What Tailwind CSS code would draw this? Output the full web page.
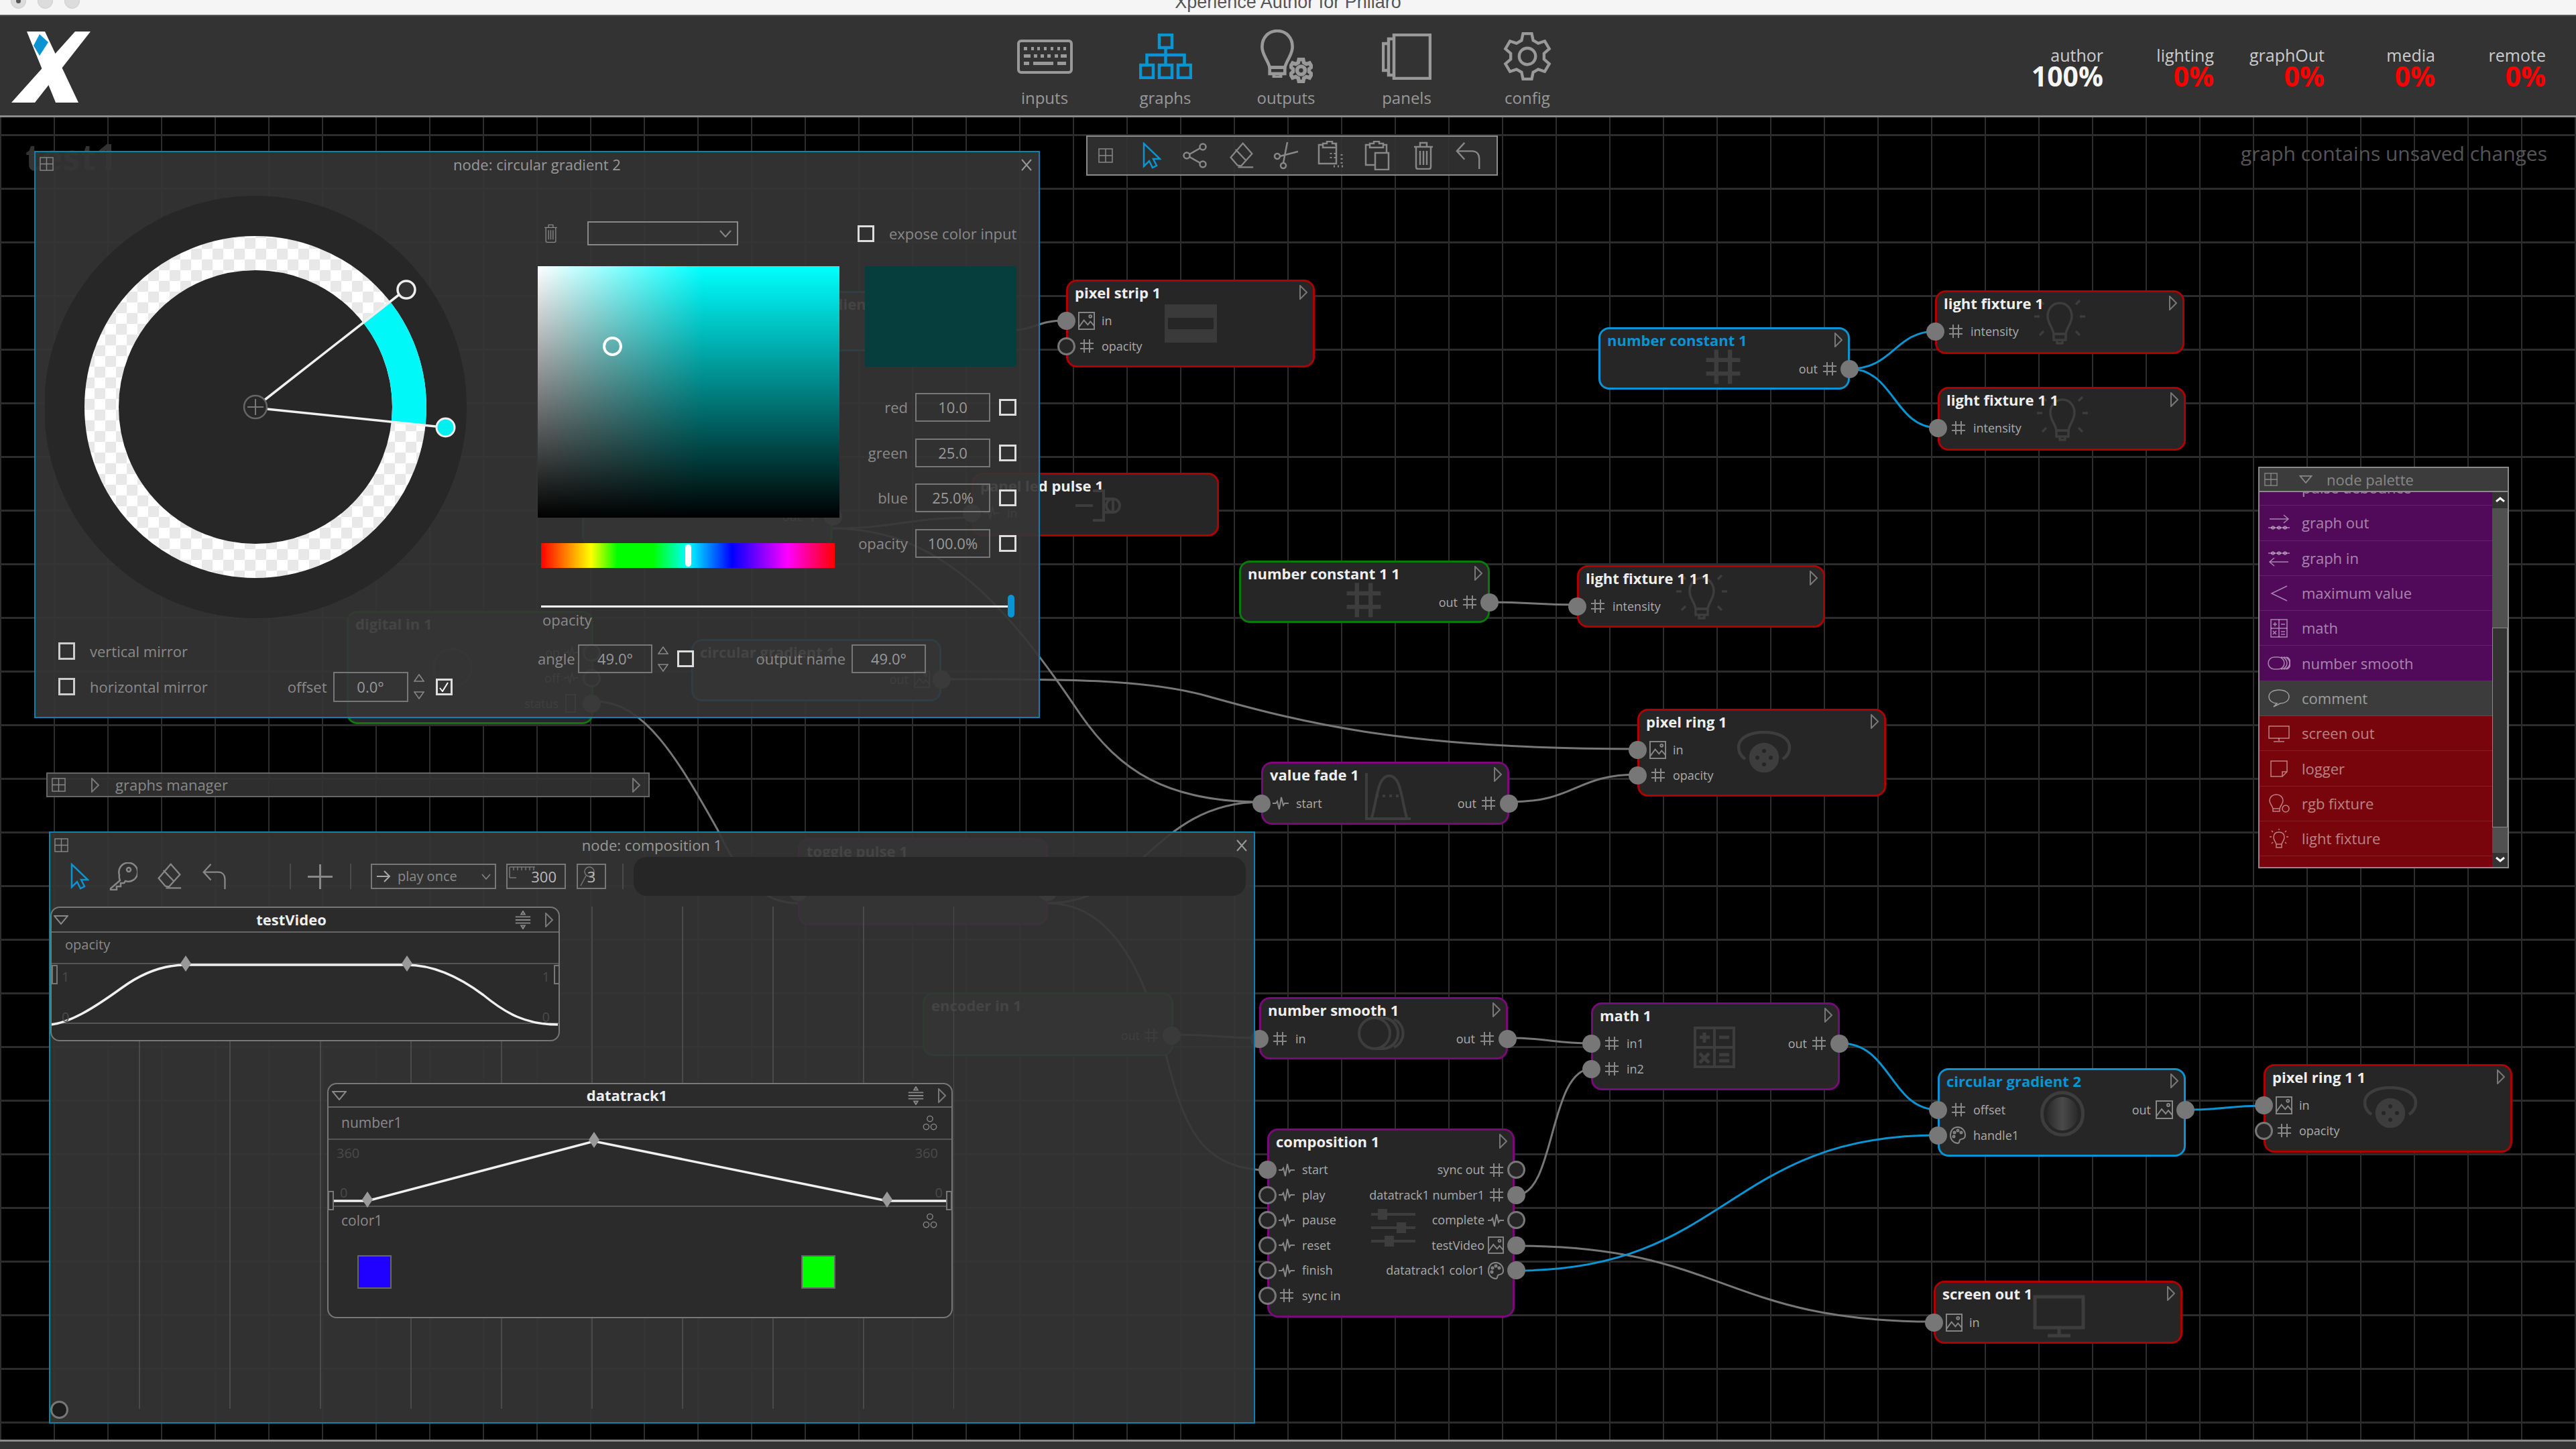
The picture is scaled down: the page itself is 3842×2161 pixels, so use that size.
<!DOCTYPE html>
<html lang="en">
<head>
  <meta charset="UTF-8">
  <title>Xperience Author for Philaro</title>
  <script src="https://cdn.jsdelivr.net/npm/@tailwindcss/browser@4"></script>
</head>
<body class="relative flex flex-col w-[3842px] h-[2161px] overflow-hidden bg-black font-['Open_Sans',sans-serif]">

  <!-- shared icons -->
  <svg class="hidden">
    <symbol id="tri" viewBox="0 0 12 22"><polygon points="1,1 11,11 1,21"/></symbol>
    <symbol id="grid" viewBox="0 0 22 22"><rect x="1" y="1" width="20" height="20"/><path d="M11 1v20M1 11h20"/></symbol>
    <symbol id="hash" viewBox="0 0 22 22"><path d="M7 1v20M15 1v20M1 7h20M1 15h20"/></symbol>
    <symbol id="pulse" viewBox="0 0 24 22"><path d="M0 11h5l2-3 3 12 3-18 3 12 2-3h6"/></symbol>
    <symbol id="image" viewBox="0 0 26 28"><rect x="1" y="1" width="24" height="26"/><path d="M1 24l8-11 6 7 4-5 6 7"/><circle cx="19" cy="7" r="2"/></symbol>
    <symbol id="palette" viewBox="0 0 24 26"><path d="M12 1C5 1 1 6 1 13s5 12 11 12c3 0 2-4 3-5 2-2 8 0 8-7S18 1 12 1z"/><circle cx="7" cy="9" r="1.5"/><circle cx="12" cy="6" r="1.5"/><circle cx="17" cy="9" r="1.5"/><circle cx="6" cy="15" r="1.5"/></symbol>
    <symbol id="gear" viewBox="0 0 100 100"><polygon points="38,17 41,3 59,3 62,17 72.500,23 86,18.500 95.400,34.400 84.500,44 84.500,56 95.400,65.600 86,81.500 72.500,77 62,83 59,97 41,97 38,83 27.500,77 14,81.500 4.600,65.600 15.500,56 15.500,44 4.600,34.400 14,18.500 27.500,23"/><circle cx="50" cy="50" r="17"/></symbol>
    <symbol id="bulb" viewBox="0 0 50 70"><path d="M25 2C12 2 3 12 3 25c0 12 8 18 11 30h22c3-12 11-18 11-30C47 12 38 2 25 2z"/><path d="M14 55h22v9H14zM20 64v5h10v-5"/></symbol>
    <symbol id="lamp" viewBox="0 0 80 76"><path d="M40 10C29 10 22 19 22 30c0 10 7 15 9 26h18c2-11 9-16 9-26 0-11-7-20-18-20z"/><path d="M31 56h18v9H31zM36 65v5h8v-5"/><path d="M2 30h8M70 30h8M10 6l6 6M70 6l-6 6M10 58l6-6M70 58l-6-6"/></symbol>
    <symbol id="pointer" viewBox="0 0 28 40"><path d="M2 2v34l8-8 5 10 6-3-5-10h10z"/></symbol>
    <symbol id="eraser" viewBox="0 0 42 44"><path d="M24 2l15 17-18 20-6-1L4 25z"/><path d="M12 12l17 18M16 41h25"/></symbol>
    <symbol id="undo" viewBox="0 0 40 44"><path d="M14 2L2 15l12 13M2 15h24c7 0 11 5 11 12v16"/></symbol>
    <symbol id="trash" viewBox="0 0 30 42"><path d="M1 8h28M10 8V2h10v6M4 8v30c0 2 1 3 3 3h16c2 0 3-1 3-3V8M10 14v21M15 14v21M20 14v21"/></symbol>
    <symbol id="vsort" viewBox="0 0 26 30"><path d="M1 10h24M1 15h24M1 20h24"/><path d="M13 1l3 5h-6zM13 29l3-5h-6z"/></symbol>
    <symbol id="gears3" viewBox="0 0 24 26"><circle cx="12" cy="6" r="4.500"/><circle cx="6" cy="19" r="4.500"/><circle cx="18" cy="19" r="4.500"/></symbol>
    <symbol id="spin" viewBox="0 0 16 40"><path d="M8 2l7 10H1zM8 38l7-10H1z"/></symbol>
  </svg>

  <!-- window title bar -->
  <div class="relative flex justify-center h-[24px] shrink-0 overflow-hidden bg-[#f5f5f5] border-b-2 border-[#555]">
    <div class="absolute left-[16px] -top-[10px] flex gap-[17px]">
      <span class="flex items-center justify-center w-[23px] h-[23px] rounded-full bg-[#dcdcdc] border border-[#ccc]"><span class="w-[7px] h-[7px] rounded-full bg-[#555]"></span></span>
      <span class="w-[23px] h-[23px] rounded-full bg-[#dcdcdc] border border-[#ccc]"></span>
      <span class="w-[23px] h-[23px] rounded-full bg-[#dcdcdc] border border-[#ccc]"></span>
    </div>
    <span class="-mt-[10px] text-[27px] leading-none text-[#555] font-['Liberation_Sans',sans-serif]">Xperience Author for Philaro</span>
  </div>

  <!-- main header -->
  <header class="flex h-[151px] shrink-0 bg-[#333] border-b-[3px] border-[#8a8a8a]">
    <div class="w-[1468px] pl-[17px] pt-[22px] shrink-0">
      <svg class="w-[120px] h-[108px]" viewBox="0 0 120 108">
        <path fill="#fff" d="M23 1h27l50 106H66z"/>
        <path fill="#fff" d="M95 1h23L35 107H0z"/>
        <path fill="#0b94d2" d="M42 5l13 12-13 20-9-15z"/>
      </svg>
    </div>
    <nav class="flex shrink-0 text-[24px] text-[#999]">
      <div class="flex flex-col items-center w-[180px] pt-[20px]">
        <div class="flex items-center justify-center h-[80px]">
          <svg class="w-[83px] h-[51px]" viewBox="0 0 83 51" fill="#999"><rect x="2" y="2" width="79" height="47" rx="4" fill="none" stroke="#999" stroke-width="4"/><path d="M10 11h5v5h-5zM21 11h4v5h-4zM30 11h4v5h-4zM40 11h4v5h-4zM50 11h4v5h-4zM60 11h4v5h-4zM69 11h4v5h-4zM10 22h10v5H10zM25 22h5v5h-5zM35 22h5v5h-5zM45 22h5v5h-5zM56 22h5v5h-5zM65 22h9v5h-9zM10 33h8v5h-8zM24 33h30v5H24zM60 33h13v5H60z"/></svg>
        </div>
        <span class="mt-[7px] leading-[30px]">inputs</span>
      </div>
      <div class="flex flex-col items-center w-[180px] pt-[20px]">
        <div class="flex items-center justify-center h-[80px]">
          <svg class="w-[79px] h-[68px] fill-none stroke-[#0a94d2] stroke-[4.5px]" viewBox="0 0 79 68"><rect x="30" y="2" width="19" height="19"/><rect x="2" y="47" width="19" height="19"/><rect x="30" y="47" width="19" height="19"/><rect x="58" y="47" width="19" height="19"/><path d="M39.500 21v26M11.500 47V32h56v15"/></svg>
        </div>
        <span class="mt-[7px] leading-[30px]">graphs</span>
      </div>
      <div class="flex flex-col items-center w-[180px] pt-[20px]">
        <div class="relative flex items-center justify-center w-[79px] h-[80px]">
          <svg class="absolute left-0 top-0 w-[52px] h-[72px] fill-none stroke-[#999] stroke-[4.500px]"><use href="#bulb"/></svg>
          <svg class="absolute right-0 bottom-0 w-[35px] h-[38px] fill-none stroke-[#999] stroke-[16px]"><use href="#gear"/></svg>
        </div>
        <span class="mt-[7px] leading-[30px]">outputs</span>
      </div>
      <div class="flex flex-col items-center w-[180px] pt-[20px]">
        <div class="flex items-center justify-center h-[80px]">
          <svg class="w-[74px] h-[69px] fill-none stroke-[#999] stroke-[4.5px]" viewBox="0 0 74 69"><rect x="18" y="2" width="54" height="65"/><path d="M18 8h-8v54h8M10 15H2v40h8"/></svg>
        </div>
        <span class="mt-[7px] leading-[30px]">panels</span>
      </div>
      <div class="flex flex-col items-center w-[180px] pt-[20px]">
        <div class="flex items-center justify-center h-[80px]">
          <svg class="w-[72px] h-[74px] fill-none stroke-[#999] stroke-[6px]"><use href="#gear"/></svg>
        </div>
        <span class="mt-[7px] leading-[30px]">config</span>
      </div>
    </nav>
    <div class="flex ml-auto pr-[45px] pt-[43px] text-right">
      <div class="w-[165px]"><div class="text-[25px] leading-[30px] text-[#ccc]">author</div><div class="text-[41px] leading-[32px] font-bold text-[#f5f5f5]">100%</div></div>
      <div class="w-[165px]"><div class="text-[25px] leading-[30px] text-[#ccc]">lighting</div><div class="text-[41px] leading-[32px] font-bold text-[#f00]">0%</div></div>
      <div class="w-[165px]"><div class="text-[25px] leading-[30px] text-[#ccc]">graphOut</div><div class="text-[41px] leading-[32px] font-bold text-[#f00]">0%</div></div>
      <div class="w-[165px]"><div class="text-[25px] leading-[30px] text-[#ccc]">media</div><div class="text-[41px] leading-[32px] font-bold text-[#f00]">0%</div></div>
      <div class="w-[165px]"><div class="text-[25px] leading-[30px] text-[#ccc]">remote</div><div class="text-[41px] leading-[32px] font-bold text-[#f00]">0%</div></div>
    </div>
  </header>

  <!-- graph canvas -->
  <main class="flex-1 bg-black bg-[linear-gradient(to_right,#2c2c2c_2px,transparent_2px),linear-gradient(to_bottom,#2c2c2c_3px,transparent_3px)] bg-size-[80px_80px] bg-position-[0px_25px]"></main>
  <footer class="h-[14px] shrink-0 bg-[#333] border-t-[3px] border-[#8a8a8a]"></footer>

  <span class="absolute left-[38px] top-[193px] text-[54px] font-bold text-[#333]">test1</span>
  <span class="absolute right-[43px] top-[207px] text-[30px] leading-[44px] text-[#555]">graph contains unsaved changes</span>

  <!-- edges -->
  <svg class="absolute left-0 top-0 w-[3842px] h-[2161px] fill-none stroke-[3px]" viewBox="0 0 3842 2161">
    <g class="stroke-[#777]">
      <path d="M1500 493C1545 493 1545 478 1590 478"/>
      <path d="M1242 788C1340 788 1350 772 1449 772"/>
      <path d="M1242 788C1400 788 1500 900 1611 1065C1670 1150 1740 1196 1882 1196"/>
      <path d="M888 1046C960 1046 1010 1130 1070 1237C1100 1300 1130 1347 1190 1347"/>
      <path d="M1404 1013C1550 1013 1700 1010 1800 1038C1950 1080 2100 1117 2443 1117"/>
      <path d="M1563 1347C1680 1347 1720 1500 1746 1600C1770 1690 1800 1745 1891 1745"/>
      <path d="M1563 1347C1700 1347 1720 1196 1882 1196"/>
      <path d="M1750 1543C1810 1543 1820 1548 1880 1548"/>
      <path d="M2251 1548C2310 1548 2315 1556 2374 1556"/>
      <path d="M2262 1782C2320 1782 2310 1594 2374 1594"/>
      <path d="M2262 1858C2570 1858 2570 1971 2884 1971"/>
      <path d="M2253 1196C2350 1196 2350 1155 2443 1155"/>
      <path d="M2222 898C2285 898 2290 902 2352 902"/>
    </g>
    <g class="stroke-[#0a94d2]">
      <path d="M2758 550C2825 550 2825 494 2888 494"/>
      <path d="M2758 550C2825 550 2825 638 2890 638"/>
      <path d="M2746 1556C2820 1556 2820 1655 2890 1655"/>
      <path d="M2262 1895C2576 1895 2576 1693 2890 1693"/>
      <path d="M3262 1655C3320 1655 3320 1649 3377 1649"/>
    </g>
  </svg>

  <!-- nodes behind the floating windows -->
  <div class="absolute left-[1125px] top-[434px] w-[373px] h-[90px] rounded-2xl border-[3px] border-[#0a94d2] bg-[#262626]">
    <div class="flex items-center h-[38px] pb-[6px] pl-[10px]"><span class="text-[22px] font-bold text-[#eee]">linear gradient 1</span></div>
  </div>
  <div class="absolute left-[868px] top-[700px] w-[374px] h-[115px] rounded-2xl border-[3px] border-[#0a7a0a] bg-[#262626]">
    <div class="flex items-center justify-end h-[38px] mt-[48px] -mr-[17px] text-[18px] text-[#aaa]">out<svg class="w-[22px] h-[22px] ml-[8px] fill-none stroke-[#888] stroke-2"><use href="#pulse"/></svg><span class="w-[27px] h-[27px] ml-[4px] rounded-full bg-[#777]"></span></div>
  </div>
  <div class="absolute left-[1449px] top-[705px] w-[369px] h-[95px] rounded-2xl border-[3px] border-[#b00000] bg-[#262626]">
    <div class="flex items-center h-[38px] pb-[6px] pl-[10px]"><span class="text-[22px] font-bold text-[#eee]">panel led pulse 1</span></div>
    <div class="flex items-center h-[38px] -ml-[16px] text-[18px] text-[#aaa]"><span class="w-[27px] h-[27px] rounded-full bg-[#777]"></span><svg class="w-[24px] h-[22px] ml-[4px] fill-none stroke-[#888] stroke-2"><use href="#pulse"/></svg><span class="ml-[11px]">in</span></div>
    <svg class="absolute left-[152px] top-[16px] w-[68px] h-[60px] fill-none stroke-[#3d3d3d] stroke-[4px]" viewBox="0 0 68 60"><path d="M0 30h26M26 8h16v44H26M42 20h14v20H42"/><circle cx="56" cy="30" r="10"/></svg>
  </div>
  <div class="absolute left-[517px] top-[911px] w-[368px] h-[169px] rounded-2xl border-[3px] border-[#0a7a0a] bg-[#262626]">
    <div class="flex items-center h-[38px] pb-[6px] pl-[10px]"><span class="text-[22px] font-bold text-[#eee]">digital in 1</span></div>
    <div class="flex flex-col items-end -mr-[14px] mt-[2px] text-[18px] text-[#aaa]">
      <div class="flex items-center h-[38px]">on<svg class="w-[22px] h-[22px] mx-[6px] fill-none stroke-[#888] stroke-2"><use href="#pulse"/></svg><span class="w-[27px] h-[27px] rounded-full bg-[#262626] border-[3px] border-[#777]"></span></div>
      <div class="flex items-center h-[38px]">off<svg class="w-[22px] h-[22px] mx-[6px] fill-none stroke-[#888] stroke-2"><use href="#pulse"/></svg><span class="w-[27px] h-[27px] rounded-full bg-[#262626] border-[3px] border-[#777]"></span></div>
      <div class="flex items-center h-[38px]">status<span class="w-[16px] h-[28px] mx-[10px] border-2 border-[#888]"></span><span class="w-[27px] h-[27px] rounded-full bg-[#777]"></span></div>
    </div>
    <span class="absolute left-[125px] top-[52px] w-[60px] h-[60px] rounded-full border-4 border-[#3d3d3d]"></span>
  </div>
  <div class="absolute left-[1031px] top-[953px] w-[373px] h-[93px] rounded-2xl border-[3px] border-[#0a94d2] bg-[#262626]">
    <div class="flex items-center h-[38px] pb-[6px] pl-[10px]"><span class="text-[22px] font-bold text-[#eee]">circular gradient 1</span></div>
    <div class="flex items-center justify-end h-[38px] -mr-[17px] text-[18px] text-[#aaa]">out<svg class="w-[24px] h-[26px] ml-[8px] fill-none stroke-[#888] stroke-2"><use href="#image"/></svg><span class="w-[27px] h-[27px] ml-[4px] rounded-full bg-[#777]"></span></div>
  </div>
  <div class="absolute left-[1190px] top-[1250px] w-[373px] h-[130px] rounded-2xl border-[3px] border-[#7a0a7a] bg-[#262626]">
    <div class="flex items-center h-[38px] pb-[6px] pl-[10px]"><span class="text-[22px] font-bold text-[#eee]">toggle pulse 1</span></div>
    <div class="flex items-center justify-between h-[38px] mt-[20px] -mx-[16px] text-[18px] text-[#aaa]"><span class="w-[27px] h-[27px] rounded-full bg-[#777]"></span><span class="w-[27px] h-[27px] rounded-full bg-[#777]"></span></div>
  </div>
  <div class="absolute left-[1376px] top-[1480px] w-[374px] h-[95px] rounded-2xl border-[3px] border-[#0a7a0a] bg-[#262626]">
    <div class="flex items-center h-[38px] pb-[6px] pl-[10px]"><span class="text-[22px] font-bold text-[#eee]">encoder in 1</span></div>
    <div class="flex items-center justify-end h-[38px] mt-[4px] -mr-[14px] text-[18px] text-[#aaa]">out<svg class="w-[22px] h-[22px] mx-[6px] fill-none stroke-[#888] stroke-2"><use href="#hash"/></svg><span class="w-[27px] h-[27px] rounded-full bg-[#777]"></span></div>
  </div>

  <!-- nodes -->
  <div class="absolute left-[1590px] top-[417px] w-[371px] h-[131px] rounded-2xl border-[3px] border-[#b00000] bg-[#262626]">
    <div class="flex items-center justify-between h-[38px] pb-[6px] pl-[10px] pr-[8px]"><span class="text-[22px] font-bold text-[#eee]">pixel strip 1</span><svg class="w-[12px] h-[22px] fill-none stroke-[#777] stroke-2"><use href="#tri"/></svg></div>
    <div class="mt-[1px] text-[18px] text-[#aaa]">
      <div class="flex items-center h-[38px] -ml-[16px]"><span class="w-[27px] h-[27px] rounded-full bg-[#777]"></span><svg class="w-[25px] h-[27px] ml-[4px] fill-none stroke-[#888] stroke-2"><use href="#image"/></svg><span class="ml-[10px]">in</span></div>
      <div class="flex items-center h-[38px] -ml-[16px]"><span class="w-[27px] h-[27px] rounded-full bg-[#262626] border-[3px] border-[#777]"></span><svg class="w-[22px] h-[22px] ml-[6px] fill-none stroke-[#888] stroke-2"><use href="#hash"/></svg><span class="ml-[11px]">opacity</span></div>
    </div>
    <div class="absolute left-[144px] top-[34px] flex items-center w-[78px] h-[57px] px-[5px] bg-[#3a3a3a]"><span class="w-full h-[17px] bg-[#262626]"></span></div>
  </div>

  <div class="absolute left-[2384px] top-[488px] w-[375px] h-[93px] rounded-2xl border-[3px] border-[#0a94d2] bg-[#262626]">
    <div class="flex items-center justify-between h-[38px] pb-[6px] pl-[10px] pr-[8px]"><span class="text-[22px] font-bold text-[#0a94d2]">number constant 1</span><svg class="w-[12px] h-[22px] fill-none stroke-[#777] stroke-2"><use href="#tri"/></svg></div>
    <div class="flex items-center justify-end h-[38px] mt-[2px] -mr-[16px] text-[18px] text-[#aaa]">out<svg class="w-[22px] h-[22px] ml-[7px] fill-none stroke-[#888] stroke-2"><use href="#hash"/></svg><span class="w-[27px] h-[27px] ml-[5px] rounded-full bg-[#777]"></span></div>
    <svg class="absolute left-[150px] top-[28px] w-[66px] h-[56px] fill-none stroke-[#3d3d3d] stroke-[2.500px]"><use href="#hash"/></svg>
  </div>

  <div class="absolute left-[1848px] top-[836px] w-[374px] h-[93px] rounded-2xl border-[3px] border-[#0a7a0a] bg-[#262626]">
    <div class="flex items-center justify-between h-[38px] pb-[6px] pl-[10px] pr-[8px]"><span class="text-[22px] font-bold text-[#eee]">number constant 1 1</span><svg class="w-[12px] h-[22px] fill-none stroke-[#777] stroke-2"><use href="#tri"/></svg></div>
    <div class="flex items-center justify-end h-[38px] mt-[2px] -mr-[16px] text-[18px] text-[#aaa]">out<svg class="w-[22px] h-[22px] ml-[7px] fill-none stroke-[#888] stroke-2"><use href="#hash"/></svg><span class="w-[27px] h-[27px] ml-[5px] rounded-full bg-[#777]"></span></div>
    <svg class="absolute left-[150px] top-[28px] w-[66px] h-[56px] fill-none stroke-[#3d3d3d] stroke-[2.500px]"><use href="#hash"/></svg>
  </div>

  <div class="absolute left-[2886px] top-[433px] w-[372px] h-[95px] rounded-2xl border-[3px] border-[#b00000] bg-[#262626]">
    <svg class="absolute left-[143px] top-[6px] w-[80px] h-[76px] fill-none stroke-[#3d3d3d] stroke-[3.500px]"><use href="#lamp"/></svg>
    <div class="relative flex items-center justify-between h-[38px] pb-[6px] pl-[10px] pr-[8px]"><span class="text-[22px] font-bold text-[#eee]">light fixture 1</span><svg class="w-[12px] h-[22px] fill-none stroke-[#777] stroke-2"><use href="#tri"/></svg></div>
    <div class="relative flex items-center h-[38px] mt-[1px] -ml-[16px] text-[18px] text-[#aaa]"><span class="w-[27px] h-[27px] rounded-full bg-[#777]"></span><svg class="w-[22px] h-[22px] ml-[6px] fill-none stroke-[#888] stroke-2"><use href="#hash"/></svg><span class="ml-[11px]">intensity</span></div>
  </div>

  <div class="absolute left-[2890px] top-[577px] w-[370px] h-[95px] rounded-2xl border-[3px] border-[#b00000] bg-[#262626]">
    <svg class="absolute left-[143px] top-[6px] w-[80px] h-[76px] fill-none stroke-[#3d3d3d] stroke-[3.500px]"><use href="#lamp"/></svg>
    <div class="relative flex items-center justify-between h-[38px] pb-[6px] pl-[10px] pr-[8px]"><span class="text-[22px] font-bold text-[#eee]">light fixture 1 1</span><svg class="w-[12px] h-[22px] fill-none stroke-[#777] stroke-2"><use href="#tri"/></svg></div>
    <div class="relative flex items-center h-[38px] mt-[1px] -ml-[16px] text-[18px] text-[#aaa]"><span class="w-[27px] h-[27px] rounded-full bg-[#777]"></span><svg class="w-[22px] h-[22px] ml-[6px] fill-none stroke-[#888] stroke-2"><use href="#hash"/></svg><span class="ml-[11px]">intensity</span></div>
  </div>

  <div class="absolute left-[2352px] top-[843px] w-[370px] h-[93px] rounded-2xl border-[3px] border-[#b00000] bg-[#262626]">
    <svg class="absolute left-[143px] top-[6px] w-[80px] h-[76px] fill-none stroke-[#3d3d3d] stroke-[3.500px]"><use href="#lamp"/></svg>
    <div class="relative flex items-center justify-between h-[38px] pb-[6px] pl-[10px] pr-[8px]"><span class="text-[22px] font-bold text-[#eee]">light fixture 1 1 1</span><svg class="w-[12px] h-[22px] fill-none stroke-[#777] stroke-2"><use href="#tri"/></svg></div>
    <div class="relative flex items-center h-[38px] mt-[1px] -ml-[16px] text-[18px] text-[#aaa]"><span class="w-[27px] h-[27px] rounded-full bg-[#777]"></span><svg class="w-[22px] h-[22px] ml-[6px] fill-none stroke-[#888] stroke-2"><use href="#hash"/></svg><span class="ml-[11px]">intensity</span></div>
  </div>

  <div class="absolute left-[2442px] top-[1057px] w-[371px] h-[131px] rounded-2xl border-[3px] border-[#b00000] bg-[#262626]">
    <div class="flex items-center justify-between h-[38px] pb-[6px] pl-[10px] pr-[8px]"><span class="text-[22px] font-bold text-[#eee]">pixel ring 1</span><svg class="w-[12px] h-[22px] fill-none stroke-[#777] stroke-2"><use href="#tri"/></svg></div>
    <div class="mt-[1px] text-[18px] text-[#aaa]">
      <div class="flex items-center h-[38px] -ml-[16px]"><span class="w-[27px] h-[27px] rounded-full bg-[#777]"></span><svg class="w-[25px] h-[27px] ml-[4px] fill-none stroke-[#888] stroke-2"><use href="#image"/></svg><span class="ml-[10px]">in</span></div>
      <div class="flex items-center h-[38px] -ml-[16px]"><span class="w-[27px] h-[27px] rounded-full bg-[#777]"></span><svg class="w-[22px] h-[22px] ml-[6px] fill-none stroke-[#888] stroke-2"><use href="#hash"/></svg><span class="ml-[11px]">opacity</span></div>
    </div>
    <svg class="absolute left-[146px] top-[30px] w-[80px] h-[62px] fill-none stroke-[#3d3d3d] stroke-[4.500px]" viewBox="0 0 80 62"><path d="M12 42C3 36 2 28 2 24 2 10 20 2 40 2s38 8 38 22c0 4-1 12-10 18"/><circle cx="40" cy="40" r="20" fill="#3d3d3d"/><circle cx="40" cy="30" r="3" fill="#262626" stroke="none"/><circle cx="40" cy="50" r="3" fill="#262626" stroke="none"/><circle cx="30" cy="40" r="3" fill="#262626" stroke="none"/><circle cx="50" cy="40" r="3" fill="#262626" stroke="none"/></svg>
  </div>

  <div class="absolute left-[1881px] top-[1136px] w-[370px] h-[94px] rounded-2xl border-[3px] border-[#7a0a7a] bg-[#262626]">
    <svg class="absolute left-[152px] top-[14px] w-[68px] h-[70px] fill-none stroke-[#3d3d3d] stroke-[4px]" viewBox="0 0 68 70"><path d="M2 0v68h66"/><path d="M10 66C18 40 18 4 36 4s18 36 26 62"/><path d="M16 34h4M26 34h4M36 34h4M46 34h4" stroke-dasharray="4 3"/></svg>
    <div class="relative flex items-center justify-between h-[38px] pb-[6px] pl-[10px] pr-[8px]"><span class="text-[22px] font-bold text-[#eee]">value fade 1</span><svg class="w-[12px] h-[22px] fill-none stroke-[#777] stroke-2"><use href="#tri"/></svg></div>
    <div class="relative flex items-center justify-between h-[38px] mt-[2px] -mx-[16px] text-[18px] text-[#aaa]">
      <div class="flex items-center"><span class="w-[27px] h-[27px] rounded-full bg-[#777]"></span><svg class="w-[24px] h-[22px] ml-[3px] fill-none stroke-[#888] stroke-2"><use href="#pulse"/></svg><span class="ml-[11px]">start</span></div>
      <div class="flex items-center">out<svg class="w-[22px] h-[22px] ml-[7px] fill-none stroke-[#888] stroke-2"><use href="#hash"/></svg><span class="w-[27px] h-[27px] ml-[6px] rounded-full bg-[#777]"></span></div>
    </div>
  </div>

  <div class="absolute left-[1878px] top-[1487px] w-[371px] h-[93px] rounded-2xl border-[3px] border-[#7a0a7a] bg-[#262626]">
    <svg class="absolute left-[144px] top-[26px] w-[82px] h-[50px] fill-none stroke-[#3d3d3d] stroke-[4px]" viewBox="0 0 82 50"><circle cx="25" cy="25" r="23"/><path d="M25 2h12a23 23 0 0 1 0 46H25M44 3a23 23 0 0 1 0 44M54 4a23 23 0 0 1 0 42"/></svg>
    <div class="relative flex items-center justify-between h-[38px] pb-[6px] pl-[10px] pr-[8px]"><span class="text-[22px] font-bold text-[#eee]">number smooth 1</span><svg class="w-[12px] h-[22px] fill-none stroke-[#777] stroke-2"><use href="#tri"/></svg></div>
    <div class="relative flex items-center justify-between h-[38px] mt-[2px] -mx-[16px] text-[18px] text-[#aaa]">
      <div class="flex items-center"><span class="w-[27px] h-[27px] rounded-full bg-[#777]"></span><svg class="w-[22px] h-[22px] ml-[6px] fill-none stroke-[#888] stroke-2"><use href="#hash"/></svg><span class="ml-[12px]">in</span></div>
      <div class="flex items-center">out<svg class="w-[22px] h-[22px] ml-[7px] fill-none stroke-[#888] stroke-2"><use href="#hash"/></svg><span class="w-[27px] h-[27px] ml-[6px] rounded-full bg-[#777]"></span></div>
    </div>
  </div>

  <div class="absolute left-[2373px] top-[1495px] w-[371px] h-[131px] rounded-2xl border-[3px] border-[#7a0a7a] bg-[#262626]">
    <svg class="absolute left-[150px] top-[33px] w-[62px] h-[62px] text-[#3d3d3d]" viewBox="0 0 62 62" fill="none" stroke="currentColor" stroke-width="4"><rect x="2" y="2" width="58" height="58"/><path d="M31 2v58M2 31h58"/><path stroke-width="5" d="M9 16h15M16 9v15M38 16h15M9 40l14 14M23 40L9 54M38 42h15M38 51h15"/></svg>
    <div class="relative flex items-center justify-between h-[38px] pb-[6px] pl-[10px] pr-[8px]"><span class="text-[22px] font-bold text-[#eee]">math 1</span><svg class="w-[12px] h-[22px] fill-none stroke-[#777] stroke-2"><use href="#tri"/></svg></div>
    <div class="relative flex justify-between mt-[1px] -mx-[16px] text-[18px] text-[#aaa]">
      <div>
        <div class="flex items-center h-[38px]"><span class="w-[27px] h-[27px] rounded-full bg-[#777]"></span><svg class="w-[22px] h-[22px] ml-[6px] fill-none stroke-[#888] stroke-2"><use href="#hash"/></svg><span class="ml-[11px]">in1</span></div>
        <div class="flex items-center h-[38px]"><span class="w-[27px] h-[27px] rounded-full bg-[#777]"></span><svg class="w-[22px] h-[22px] ml-[6px] fill-none stroke-[#888] stroke-2"><use href="#hash"/></svg><span class="ml-[11px]">in2</span></div>
      </div>
      <div class="flex items-center h-[38px]">out<svg class="w-[22px] h-[22px] ml-[7px] fill-none stroke-[#888] stroke-2"><use href="#hash"/></svg><span class="w-[27px] h-[27px] ml-[6px] rounded-full bg-[#777]"></span></div>
    </div>
  </div>

  <div class="absolute left-[1890px] top-[1683px] w-[369px] h-[282px] rounded-2xl border-[3px] border-[#7a0a7a] bg-[#262626]">
    <svg class="absolute left-[150px] top-[115px] w-[70px] h-[62px] fill-none stroke-[#3d3d3d] stroke-[4px]" viewBox="0 0 70 62"><path d="M2 10h66M2 30h66M2 50h66"/><rect x="14" y="4" width="10" height="12" fill="#3d3d3d"/><rect x="42" y="24" width="10" height="12" fill="#3d3d3d"/><rect x="24" y="44" width="10" height="12" fill="#3d3d3d"/></svg>
    <div class="relative flex items-center justify-between h-[38px] pb-[6px] pl-[10px] pr-[8px]"><span class="text-[22px] font-bold text-[#eee]">composition 1</span><svg class="w-[12px] h-[22px] fill-none stroke-[#777] stroke-2"><use href="#tri"/></svg></div>
    <div class="relative flex justify-between mt-[2px] -mx-[16px] text-[18px] text-[#aaa]">
      <div>
        <div class="flex items-center h-[37.500px]"><span class="w-[27px] h-[27px] rounded-full bg-[#777]"></span><svg class="w-[24px] h-[22px] ml-[3px] fill-none stroke-[#888] stroke-2"><use href="#pulse"/></svg><span class="ml-[11px]">start</span></div>
        <div class="flex items-center h-[37.500px]"><span class="w-[27px] h-[27px] rounded-full bg-[#262626] border-[3px] border-[#777]"></span><svg class="w-[24px] h-[22px] ml-[3px] fill-none stroke-[#888] stroke-2"><use href="#pulse"/></svg><span class="ml-[11px]">play</span></div>
        <div class="flex items-center h-[37.500px]"><span class="w-[27px] h-[27px] rounded-full bg-[#262626] border-[3px] border-[#777]"></span><svg class="w-[24px] h-[22px] ml-[3px] fill-none stroke-[#888] stroke-2"><use href="#pulse"/></svg><span class="ml-[11px]">pause</span></div>
        <div class="flex items-center h-[37.500px]"><span class="w-[27px] h-[27px] rounded-full bg-[#262626] border-[3px] border-[#777]"></span><svg class="w-[24px] h-[22px] ml-[3px] fill-none stroke-[#888] stroke-2"><use href="#pulse"/></svg><span class="ml-[11px]">reset</span></div>
        <div class="flex items-center h-[37.500px]"><span class="w-[27px] h-[27px] rounded-full bg-[#262626] border-[3px] border-[#777]"></span><svg class="w-[24px] h-[22px] ml-[3px] fill-none stroke-[#888] stroke-2"><use href="#pulse"/></svg><span class="ml-[11px]">finish</span></div>
        <div class="flex items-center h-[37.500px]"><span class="w-[27px] h-[27px] rounded-full bg-[#262626] border-[3px] border-[#777]"></span><svg class="w-[22px] h-[22px] ml-[4px] fill-none stroke-[#888] stroke-2"><use href="#hash"/></svg><span class="ml-[12px]">sync in</span></div>
      </div>
      <div class="-mr-[3px]">
        <div class="flex items-center justify-end h-[37.500px]">sync out<svg class="w-[22px] h-[22px] ml-[7px] fill-none stroke-[#888] stroke-2"><use href="#hash"/></svg><span class="w-[27px] h-[27px] ml-[5px] rounded-full bg-[#262626] border-[3px] border-[#777]"></span></div>
        <div class="flex items-center justify-end h-[37.500px]">datatrack1 number1<svg class="w-[22px] h-[22px] ml-[7px] fill-none stroke-[#888] stroke-2"><use href="#hash"/></svg><span class="w-[27px] h-[27px] ml-[5px] rounded-full bg-[#777]"></span></div>
        <div class="flex items-center justify-end h-[37.500px]">complete<svg class="w-[24px] h-[22px] ml-[5px] fill-none stroke-[#888] stroke-2"><use href="#pulse"/></svg><span class="w-[27px] h-[27px] ml-[5px] rounded-full bg-[#262626] border-[3px] border-[#777]"></span></div>
        <div class="flex items-center justify-end h-[37.500px]">testVideo<svg class="w-[24px] h-[26px] ml-[5px] fill-none stroke-[#888] stroke-2"><use href="#image"/></svg><span class="w-[27px] h-[27px] ml-[5px] rounded-full bg-[#777]"></span></div>
        <div class="flex items-center justify-end h-[37.500px]">datatrack1 color1<svg class="w-[24px] h-[26px] ml-[5px] fill-none stroke-[#888] stroke-2"><use href="#palette"/></svg><span class="w-[27px] h-[27px] ml-[5px] rounded-full bg-[#777]"></span></div>
      </div>
    </div>
  </div>

  <div class="absolute left-[2890px] top-[1593px] w-[370px] h-[132px] rounded-2xl border-[3px] border-[#0a94d2] bg-[#262626]">
    <span class="absolute left-[150px] top-[31px] flex items-center justify-center w-[66px] h-[68px] rounded-full border-[5px] border-[#3d3d3d]"><span class="w-[46px] h-[50px] rounded-full bg-[linear-gradient(to_right,#2a2a2a,#4a4a4a,#2a2a2a)]"></span></span>
    <div class="relative flex items-center justify-between h-[38px] pb-[6px] pl-[10px] pr-[8px]"><span class="text-[22px] font-bold text-[#0a94d2]">circular gradient 2</span><svg class="w-[12px] h-[22px] fill-none stroke-[#777] stroke-2"><use href="#tri"/></svg></div>
    <div class="relative flex justify-between mt-[2px] -mx-[16px] text-[18px] text-[#aaa]">
      <div>
        <div class="flex items-center h-[38px]"><span class="w-[27px] h-[27px] rounded-full bg-[#777]"></span><svg class="w-[22px] h-[22px] ml-[6px] fill-none stroke-[#888] stroke-2"><use href="#hash"/></svg><span class="ml-[11px]">offset</span></div>
        <div class="flex items-center h-[38px]"><span class="w-[27px] h-[27px] rounded-full bg-[#777]"></span><svg class="w-[24px] h-[26px] ml-[4px] fill-none stroke-[#888] stroke-2"><use href="#palette"/></svg><span class="ml-[11px]">handle1</span></div>
      </div>
      <div class="flex items-center h-[38px]">out<svg class="w-[26px] h-[28px] ml-[7px] fill-none stroke-[#888] stroke-2"><use href="#image"/></svg><span class="w-[27px] h-[27px] ml-[5px] rounded-full bg-[#777]"></span></div>
    </div>
  </div>

  <div class="absolute left-[3376px] top-[1587px] w-[371px] h-[132px] rounded-2xl border-[3px] border-[#b00000] bg-[#262626]">
    <svg class="absolute left-[146px] top-[30px] w-[80px] h-[62px] fill-none stroke-[#3d3d3d] stroke-[4.500px]" viewBox="0 0 80 62"><path d="M12 42C3 36 2 28 2 24 2 10 20 2 40 2s38 8 38 22c0 4-1 12-10 18"/><circle cx="40" cy="40" r="20" fill="#3d3d3d"/><circle cx="40" cy="30" r="3" fill="#262626" stroke="none"/><circle cx="40" cy="50" r="3" fill="#262626" stroke="none"/><circle cx="30" cy="40" r="3" fill="#262626" stroke="none"/><circle cx="50" cy="40" r="3" fill="#262626" stroke="none"/></svg>
    <div class="relative flex items-center justify-between h-[38px] pb-[6px] pl-[10px] pr-[8px]"><span class="text-[22px] font-bold text-[#eee]">pixel ring 1 1</span><svg class="w-[12px] h-[22px] fill-none stroke-[#777] stroke-2"><use href="#tri"/></svg></div>
    <div class="relative mt-[1px] text-[18px] text-[#aaa]">
      <div class="flex items-center h-[38px] -ml-[16px]"><span class="w-[27px] h-[27px] rounded-full bg-[#777]"></span><svg class="w-[25px] h-[27px] ml-[4px] fill-none stroke-[#888] stroke-2"><use href="#image"/></svg><span class="ml-[10px]">in</span></div>
      <div class="flex items-center h-[38px] -ml-[16px]"><span class="w-[27px] h-[27px] rounded-full bg-[#262626] border-[3px] border-[#777]"></span><svg class="w-[22px] h-[22px] ml-[6px] fill-none stroke-[#888] stroke-2"><use href="#hash"/></svg><span class="ml-[11px]">opacity</span></div>
    </div>
  </div>

  <div class="absolute left-[2884px] top-[1910px] w-[371px] h-[94px] rounded-2xl border-[3px] border-[#b00000] bg-[#262626]">
    <svg class="absolute left-[145px] top-[18px] w-[78px] h-[64px] fill-none stroke-[#3d3d3d] stroke-[5px]" viewBox="0 0 78 64"><rect x="3" y="3" width="72" height="46"/><path d="M39 49v10M22 61h34"/></svg>
    <div class="relative flex items-center justify-between h-[38px] pb-[6px] pl-[10px] pr-[8px]"><span class="text-[22px] font-bold text-[#eee]">screen out 1</span><svg class="w-[12px] h-[22px] fill-none stroke-[#777] stroke-2"><use href="#tri"/></svg></div>
    <div class="relative flex items-center h-[38px] mt-[2px] -ml-[16px] text-[18px] text-[#aaa]"><span class="w-[27px] h-[27px] rounded-full bg-[#777]"></span><svg class="w-[25px] h-[27px] ml-[4px] fill-none stroke-[#888] stroke-2"><use href="#image"/></svg><span class="ml-[10px]">in</span></div>
  </div>

  <!-- graph toolbar -->
  <div class="absolute left-[1620px] top-[202px] flex items-center w-[614px] h-[60px] bg-[#333]/90 border-2 border-[#8a8a8a] text-[#888]">
    <svg class="w-[22px] h-[22px] ml-[16px] fill-none stroke-current stroke-[1.500px]"><use href="#grid"/></svg>
    <svg class="w-[28px] h-[40px] ml-[44px] fill-none stroke-[#0a94d2] stroke-[2.500px]"><use href="#pointer"/></svg>
    <svg class="w-[38px] h-[38px] ml-[32px] fill-none stroke-current stroke-[2.500px]" viewBox="0 0 38 38"><circle cx="6" cy="19" r="4.500"/><circle cx="30" cy="6" r="4.500"/><circle cx="30" cy="32" r="4.500"/><path d="M10 17l16-9M10 21l16 9"/></svg>
    <svg class="w-[42px] h-[40px] ml-[28px] fill-none stroke-current stroke-[2.500px]"><use href="#eraser"/></svg>
    <svg class="w-[38px] h-[42px] ml-[27px] fill-none stroke-current stroke-[2.500px]" viewBox="0 0 38 42"><circle cx="6" cy="22" r="4"/><circle cx="15" cy="36" r="4"/><path d="M10 22l27-7M15 32L21 1"/></svg>
    <svg class="w-[40px] h-[44px] ml-[28px] fill-none stroke-current stroke-[2.500px]" viewBox="0 0 40 44"><path d="M8 4h6V1h8v3h6v6H8V4zM8 6H2v28h26V6h-2"/><path d="M24 38h2M30 38h2M36 38h2M36 32v2M36 26v2M36 20v2M20 18v2M26 18v2M20 24v2M26 24v2M8 6" stroke-width="3"/></svg>
    <svg class="w-[38px] h-[44px] ml-[30px] fill-none stroke-current stroke-[2.500px]" viewBox="0 0 38 44"><path d="M8 4h6V1h8v3h6v6H8V4zM8 6H2v30h14M28 6h5v12"/><rect x="16" y="18" width="20" height="25"/></svg>
    <svg class="w-[32px] h-[42px] ml-[34px] fill-none stroke-current stroke-[2.500px]"><use href="#trash"/></svg>
    <svg class="w-[40px] h-[42px] ml-[31px] fill-none stroke-current stroke-[2.500px]"><use href="#undo"/></svg>
  </div>

  <!-- circular gradient window -->
  <section class="absolute left-[51px] top-[225px] w-[1500px] h-[846px] bg-[#353535]/92 border-2 border-[#0b82b0] text-[22px] text-[#8a8a8a]">
    <div class="absolute left-[6px] top-[7px]"><svg class="w-[21px] h-[21px] fill-none stroke-[#888] stroke-[1.500px]"><use href="#grid"/></svg></div>
    <div class="absolute inset-x-0 top-[2px] text-center leading-[32px] text-[#999]">node: circular gradient 2</div>
    <div class="absolute right-[10px] top-[10px]"><svg class="w-[16px] h-[18px] fill-none stroke-[#999] stroke-2" viewBox="0 0 16 18"><path d="M1 1l14 16M15 1L1 17"/></svg></div>

    <div class="flex h-full">
      <!-- wheel and mirrors -->
      <div class="w-[749px] shrink-0 pl-[14px] pt-[65px]">
        <svg class="w-[630px] h-[630px]" viewBox="67 292 630 630">
          <defs>
            <pattern id="chk" width="32" height="32" patternUnits="userSpaceOnUse" x="13" y="3">
              <rect width="32" height="32" fill="#fff"/><rect width="16" height="16" fill="#e8e8e8"/><rect x="16" y="16" width="16" height="16" fill="#e8e8e8"/>
            </pattern>
          </defs>
          <circle cx="381" cy="607" r="315" fill="#272727"/>
          <circle cx="381" cy="607" r="229.500" fill="none" stroke="url(#chk)" stroke-width="51"/>
          <path d="M562.200 466.100A229.500 229.500 0 0 1 609.200 631.100" fill="none" stroke="#00f8f8" stroke-width="51"/>
          <path d="M394 597L597 438M398 610L650 636" stroke="#f0f0f0" stroke-width="3.500" fill="none"/>
          <circle cx="381" cy="607" r="17" fill="#272727" stroke="#666" stroke-width="2.500"/>
          <path d="M381 595v24M369 607h24" stroke="#777" stroke-width="2"/>
          <circle cx="606" cy="432" r="13" fill="#333" stroke="#eee" stroke-width="3.500"/>
          <circle cx="664.500" cy="637.500" r="13.500" fill="#00f0f0" stroke="#eee" stroke-width="3"/>
        </svg>
        <div class="flex items-center h-[26px] mt-[36px] pl-[20px]"><span class="w-[25px] h-[26px] border-[3px] border-[#ccc]"></span><span class="ml-[22px]">vertical mirror</span></div>
        <div class="flex items-center h-[26px] mt-[27px] pl-[20px]">
          <span class="w-[25px] h-[26px] border-[3px] border-[#ccc]"></span><span class="ml-[22px]">horizontal mirror</span>
          <span class="ml-[119px]">offset</span>
          <span class="flex items-center justify-center shrink-0 w-[112px] h-[45px] ml-[9px] border-2 border-[#777] text-[#999]">0.0°</span>
          <svg class="w-[16px] h-[40px] ml-[8px] fill-none stroke-[#888] stroke-[1.500px]"><use href="#spin"/></svg>
          <span class="flex items-center justify-center shrink-0 w-[25px] h-[25px] ml-[17px] border-[3px] border-[#ddd]"><svg class="w-[14px] h-[15px] fill-none stroke-white stroke-2" viewBox="0 0 14 15"><path d="M1 9l4 5 8-13"/></svg></span>
        </div>
      </div>

      <!-- color picker -->
      <div class="flex-1 pt-[103px]">
        <div class="flex items-center h-[36px]">
          <svg class="w-[23px] h-[28px] ml-[8px] fill-none stroke-[#888] stroke-2"><use href="#trash"/></svg>
          <div class="flex items-center justify-end w-[225px] h-[36px] ml-[43px] pr-[8px] border-2 border-[#888]"><svg class="w-[18px] h-[11px] fill-none stroke-[#888] stroke-2" viewBox="0 0 18 11"><path d="M1 1l8 9 8-9"/></svg></div>
          <span class="w-[25px] h-[25px] ml-[178px] border-[3px] border-[#ddd]"></span>
          <span class="ml-[22px] whitespace-nowrap">expose color input</span>
        </div>
        <div class="flex mt-[31px]">
          <div class="w-[450px]">
            <div class="relative h-[375px] bg-[linear-gradient(to_right,#fff,#0ff_55%)]">
              <div class="h-full bg-[linear-gradient(to_bottom,transparent,#000)]"></div>
              <span class="absolute left-[97px] top-[105px] w-[29px] h-[29px] rounded-full border-[4px] border-white"></span>
            </div>
            <div class="relative h-[37px] mt-[38px] ml-[5px] w-[438px] bg-[linear-gradient(to_right,#f00_0%,#ff0_17%,#0f0_26%,#0f0_38%,#0ff_50%,#00f_65%,#f0f_84%,#f00_100%)]">
              <span class="absolute left-[215px] top-[2px] w-[9px] h-[33px] rounded-full bg-white"></span>
            </div>
          </div>
          <div class="w-[226px] ml-[38px]">
            <div class="h-[150px] bg-[#063e3e]"></div>
            <div class="flex flex-col items-end gap-[24.600px] mt-[39px]">
              <div class="flex items-center"><span class="mr-[11px]">red</span><span class="flex items-center justify-center w-[112px] h-[43px] border-2 border-[#777] text-[#999]">10.0</span><span class="w-[26px] h-[25px] ml-[13px] border-[3px] border-[#ddd]"></span></div>
              <div class="flex items-center"><span class="mr-[11px]">green</span><span class="flex items-center justify-center w-[112px] h-[43px] border-2 border-[#777] text-[#999]">25.0</span><span class="w-[26px] h-[25px] ml-[13px] border-[3px] border-[#ddd]"></span></div>
              <div class="flex items-center"><span class="mr-[11px]">blue</span><span class="flex items-center justify-center w-[112px] h-[43px] border-2 border-[#777] text-[#999]">25.0%</span><span class="w-[26px] h-[25px] ml-[13px] border-[3px] border-[#ddd]"></span></div>
              <div class="flex items-center"><span class="mr-[11px]">opacity</span><span class="flex items-center justify-center w-[112px] h-[43px] border-2 border-[#777] text-[#999]">100.0%</span><span class="w-[26px] h-[25px] ml-[13px] border-[3px] border-[#ddd]"></span></div>
            </div>
          </div>
        </div>
        <div class="relative h-[34px] mt-[40px] ml-[5px] w-[706px]">
          <div class="absolute left-0 top-[16px] w-[696px] h-[3px] bg-white"></div>
          <div class="absolute left-[696px] top-0 w-[10px] h-[34px] rounded-full bg-[#0a94d2]"></div>
        </div>
        <div class="ml-[7px] -mt-[12px] leading-[30px]">opacity</div>
        <div class="flex items-center h-[43px] mt-[22px]">
          <span class="w-[50px] text-right">angle</span>
          <span class="flex items-center justify-center w-[111px] h-[43px] ml-[10px] border-2 border-[#777] text-[#999]">49.0°</span>
          <svg class="w-[16px] h-[40px] ml-[8px] fill-none stroke-[#888] stroke-[1.500px]"><use href="#spin"/></svg>
          <span class="w-[25px] h-[25px] ml-[13px] border-[3px] border-[#ddd]"></span>
          <span class="w-[226px] text-right whitespace-nowrap">output name</span>
          <span class="flex items-center justify-center w-[111px] h-[43px] ml-[9px] border-2 border-[#777] text-[#999]">49.0°</span>
        </div>
      </div>
    </div>
  </section>

  <!-- graphs manager -->
  <div class="absolute left-[69px] top-[1152px] flex items-center w-[900px] h-[37px] bg-[#333]/90 border-2 border-[#666] text-[22px] text-[#888]">
    <svg class="w-[21px] h-[21px] ml-[6px] fill-none stroke-[#888] stroke-[1.500px]"><use href="#grid"/></svg>
    <svg class="w-[12px] h-[22px] ml-[38px] fill-none stroke-[#777] stroke-2"><use href="#tri"/></svg>
    <span class="ml-[24px]">graphs manager</span>
    <svg class="w-[12px] h-[22px] ml-auto mr-[12px] fill-none stroke-[#777] stroke-2"><use href="#tri"/></svg>
  </div>

  <!-- composition window -->
  <section class="absolute left-[73px] top-[1240px] w-[1799px] h-[883px] bg-[#353535]/92 border-2 border-[#0b82b0] text-[22px] text-[#8a8a8a]">
    <div class="absolute left-[6px] top-[8px]"><svg class="w-[21px] h-[21px] fill-none stroke-[#888] stroke-[1.500px]"><use href="#grid"/></svg></div>
    <div class="h-[35px] text-center leading-[36px] text-[#999]">node: composition 1</div>
    <div class="absolute right-[10px] top-[10px]"><svg class="w-[16px] h-[18px] fill-none stroke-[#999] stroke-2" viewBox="0 0 16 18"><path d="M1 1l14 16M15 1L1 17"/></svg></div>

    <div class="flex items-center h-[60px]">
      <svg class="w-[28px] h-[40px] ml-[30px] fill-none stroke-[#0a94d2] stroke-[2.500px]"><use href="#pointer"/></svg>
      <svg class="w-[42px] h-[42px] ml-[30px] fill-none stroke-[#888] stroke-[2.500px]" viewBox="0 0 42 42"><path d="M16 27L2 39v2h9v-5h6v-5h5l2-3a14 14 0 1 0-9-9 14 14 0 0 0 1 8z"/><circle cx="29" cy="11" r="3"/></svg>
      <svg class="w-[42px] h-[40px] ml-[26px] fill-none stroke-[#888] stroke-[2.500px]"><use href="#eraser"/></svg>
      <svg class="w-[40px] h-[40px] ml-[27px] fill-none stroke-[#888] stroke-[2.500px]"><use href="#undo"/></svg>
      <span class="w-[2px] h-[38px] ml-[92px] bg-[#4a4a4a]"></span>
      <svg class="w-[37px] h-[37px] ml-[25px] fill-none stroke-[#888] stroke-[3px]" viewBox="0 0 37 37"><path d="M18.500 0v37M0 18.500h37"/></svg>
      <span class="w-[2px] h-[38px] ml-[26px] bg-[#4a4a4a]"></span>
      <div class="flex items-center w-[187px] h-[38px] ml-[29px] border-2 border-[#777] text-[20px]">
        <svg class="w-[22px] h-[22px] ml-[6px] fill-none stroke-[#aaa] stroke-2" viewBox="0 0 22 22"><path d="M1 11h19M12 3l8 8-8 8"/></svg>
        <span class="ml-[10px] whitespace-nowrap">play once</span>
        <svg class="w-[14px] h-[9px] ml-auto mr-[6px] fill-none stroke-[#888] stroke-[1.500px]" viewBox="0 0 14 9"><path d="M1 1l6 7 6-7"/></svg>
      </div>
      <div class="relative flex items-center justify-end w-[89px] h-[38px] ml-[15px] pr-[12px] border-2 border-[#777] text-[#bbb]">
        <svg class="absolute left-[2px] top-[1px] w-[40px] h-[20px] fill-none stroke-[#777] stroke-[1.500px]" viewBox="0 0 40 20"><path d="M1 2h38M1 18h10M1 2v16M7 2v5M13 2v5M19 2v5M25 2v5M31 2v5M37 2v5"/></svg>
        <span class="relative">300</span>
      </div>
      <div class="relative flex items-center justify-center w-[44px] h-[38px] ml-[16px] border-2 border-[#777] text-[#bbb]">
        <svg class="absolute left-[2px] top-[1px] w-[24px] h-[32px] fill-none stroke-[#777] stroke-[1.500px]" viewBox="0 0 24 32"><circle cx="15" cy="9" r="7"/><path d="M10 15L2 30"/></svg>
        <span class="relative">3</span>
      </div>
      <span class="w-[2px] h-[38px] ml-[24px] bg-[#4a4a4a]"></span>
      <div class="w-[913px] h-[58px] ml-[15px] rounded-[20px] bg-[#262626]"></div>
    </div>

    <!-- timeline -->
    <div class="w-[1348px] h-[749px] ml-0 bg-[linear-gradient(to_right,#4a4a4a_2px,transparent_2px)] bg-size-[135px_100%] bg-position-[132px_0px]">
      <div class="relative w-[760px] h-[201px] mt-[15px] rounded-[14px] border-2 border-[#777] bg-[#2b2b2b]">
        <div class="flex items-center justify-between h-[37px] border-b-2 border-[#666]">
          <svg class="w-[22px] h-[14px] ml-[3px] fill-none stroke-[#888] stroke-2" viewBox="0 0 22 14"><path d="M1 1h20L11 13z"/></svg>
          <span class="text-[22px] font-bold text-[#eee]">testVideo</span>
          <div class="flex items-center gap-[20px] mr-[8px]"><svg class="w-[26px] h-[28px] fill-none stroke-[#888] stroke-2"><use href="#vsort"/></svg><svg class="w-[12px] h-[22px] fill-none stroke-[#777] stroke-2"><use href="#tri"/></svg></div>
        </div>
        <div class="pl-[20px] pt-[4px] text-[20px] leading-[28px]">opacity</div>
        <svg class="absolute left-0 top-0 w-[756px] h-[197px] fill-none" viewBox="2 2 756 197">
          <path d="M2 85h756M2 174h756" stroke="#555" stroke-width="2"/>
          <path d="M2 176C30 172 60 155 107 121C140 97 170 87 202 87L531 87C570 87 610 105 646 132C680 160 710 176 757 176" stroke="#f0f0f0" stroke-width="3.500"/>
          <path d="M202 73l8 12-8 12-8-12zM532 73l8 12-8 12-8-12z" fill="#999"/>
          <path d="M3 88h7v27H3zM752 88h7v27h-7z" stroke="#777" stroke-width="2" fill="#2b2b2b"/>
        </svg>
        <span class="absolute left-[15px] top-[88px] text-[20px] text-[#4a4a4a]">1</span>
        <span class="absolute left-[15px] top-[148px] text-[20px] text-[#4a4a4a]">0</span>
        <span class="absolute right-[13px] top-[88px] text-[20px] text-[#4a4a4a]">1</span>
        <span class="absolute right-[13px] top-[148px] text-[20px] text-[#4a4a4a]">0</span>
      </div>

      <div class="relative w-[933px] h-[351px] mt-[62px] ml-[413px] rounded-[14px] border-2 border-[#777] bg-[#2b2b2b]">
        <div class="relative flex items-center justify-between h-[35px] border-b-2 border-[#666]">
          <svg class="w-[22px] h-[14px] ml-[5px] fill-none stroke-[#888] stroke-2" viewBox="0 0 22 14"><path d="M1 1h20L11 13z"/></svg>
          <span class="text-[22px] font-bold text-[#eee]">datatrack1</span>
          <div class="flex items-center gap-[20px] mr-[8px]"><svg class="w-[26px] h-[28px] fill-none stroke-[#888] stroke-2"><use href="#vsort"/></svg><svg class="w-[12px] h-[22px] fill-none stroke-[#777] stroke-2"><use href="#tri"/></svg></div>
        </div>
        <div class="flex items-center justify-between h-[46px] pl-[19px] pr-[20px] text-[21px]">number1<svg class="w-[24px] h-[24px] fill-none stroke-[#888] stroke-[1.500px]"><use href="#gears3"/></svg></div>
        <div class="h-[102px] border-t-2 border-b-2 border-[#555]"></div>
        <div class="flex items-center justify-between h-[42px] pl-[19px] pr-[20px] text-[21px]">color1<svg class="w-[24px] h-[24px] fill-none stroke-[#888] stroke-[1.500px]"><use href="#gears3"/></svg></div>
        <div class="flex justify-between mt-[30px] pl-[43px] pr-[173px]">
          <span class="w-[51px] h-[50px] bg-[#2000ff] border-2 border-[#666]"></span>
          <span class="w-[51px] h-[50px] bg-[#00ff00] border-2 border-[#666]"></span>
        </div>
        <svg class="absolute left-0 top-0 w-[929px] h-[347px] fill-none" viewBox="2 2 929 347">
          <path d="M9 176L60 176L398 87L835 176L923 176" stroke="#f0f0f0" stroke-width="3.500"/>
          <path d="M60 162l8 12-8 12-8-12zM398 73l8 12-8 12-8-12zM835 162l8 12-8 12-8-12z" fill="#999"/>
          <path d="M2 162h7v27H2zM924 162h7v27h-7z" stroke="#777" stroke-width="2" fill="#2b2b2b"/>
        </svg>
        <span class="absolute left-[12px] top-[88px] text-[20px] text-[#4a4a4a]">360</span>
        <span class="absolute left-[17px] top-[147px] text-[20px] text-[#4a4a4a]">0</span>
        <span class="absolute right-[20px] top-[88px] text-[20px] text-[#4a4a4a]">360</span>
        <span class="absolute right-[13px] top-[147px] text-[20px] text-[#4a4a4a]">0</span>
      </div>
    </div>
    <div class="absolute left-0 bottom-[5px] w-[27px] h-[27px] rounded-full bg-[#1c1c1c] border-[3px] border-[#777]"></div>
  </section>

  <!-- node palette -->
  <aside class="absolute left-[3368px] top-[696px] flex flex-col w-[374px] h-[599px] bg-[#333] border-2 border-[#8a8a8a] text-[22px] text-white/50">
    <div class="flex items-center h-[36px] shrink-0 bg-[#3c3c3c] border-b-2 border-[#8a8a8a] text-[#888]">
      <svg class="w-[20px] h-[20px] ml-[7px] fill-none stroke-[#888] stroke-[1.500px]"><use href="#grid"/></svg>
      <svg class="w-[20px] h-[12px] ml-[32px] fill-none stroke-[#888] stroke-2" viewBox="0 0 22 14"><path d="M1 1h20L11 13z"/></svg>
      <span class="ml-[21px]">node palette</span>
    </div>
    <div class="flex flex-1 min-h-0">
      <div class="flex-1 overflow-hidden">
        <div class="-mt-[32px] [&>div]:flex [&>div]:items-center [&>div]:h-[52.300px] [&>div]:border-b [&>div]:border-white/10 [&_svg]:w-[34px] [&_svg]:h-[30px] [&_svg]:ml-[12px] [&_svg]:mr-[17px] [&_svg]:fill-none [&_svg]:stroke-current [&_svg]:stroke-[1.500px]">
          <div class="bg-[#510a5a]"><svg viewBox="0 0 34 30"><path d="M2 6c8 6 22 6 30 0"/></svg>pulse debounce</div>
          <div class="bg-[#510a5a]"><svg viewBox="0 0 34 30"><path d="M3 9h28M24 3l7 6-7 6M1 22h32"/><circle cx="8" cy="22" r="2"/><circle cx="17" cy="22" r="2"/><circle cx="26" cy="22" r="2"/></svg>graph out</div>
          <div class="bg-[#510a5a]"><svg viewBox="0 0 34 30"><path d="M3 21h28M10 15l-7 6 7 6M1 8h32"/><circle cx="8" cy="8" r="2"/><circle cx="17" cy="8" r="2"/><circle cx="26" cy="8" r="2"/></svg>graph in</div>
          <div class="bg-[#510a5a]"><svg viewBox="0 0 34 30"><path d="M29 4L6 15l23 11"/></svg>maximum value</div>
          <div class="bg-[#510a5a]"><svg viewBox="0 0 34 30"><rect x="5" y="2" width="24" height="26"/><path d="M17 2v26M5 15h24M8 9h6M11 6v6M20 9h6M8 19l5 5M13 19l-5 5M20 20h6M20 24h6"/></svg>math</div>
          <div class="bg-[#510a5a]"><svg viewBox="0 0 34 30"><rect x="1" y="6" width="24" height="18" rx="9"/><path d="M20 6a9 9 0 0 1 0 18M24 6a9 9 0 0 1 0 18M28 6a6 9 0 0 1 0 18"/></svg>number smooth</div>
          <div class="bg-[#3c3c3c]"><svg viewBox="0 0 34 30"><path d="M17 3C8 3 2 7 2 13s6 10 12 10l-5 5 10-5c7 0 13-4 13-10S26 3 17 3z"/></svg>comment</div>
          <div class="bg-[#78040c]"><svg viewBox="0 0 34 30"><rect x="2" y="4" width="30" height="18"/><path d="M17 22v4M9 27h16"/></svg>screen out</div>
          <div class="bg-[#78040c]"><svg viewBox="0 0 34 30"><path d="M5 4h24v16l-7 7H5zM29 20h-7v7"/></svg>logger</div>
          <div class="bg-[#78040c]"><svg viewBox="0 0 34 30"><path d="M13 2C7 2 3 6 3 11c0 5 4 7 5 12h10c1-5 5-7 5-12 0-5-4-9-10-9zM8 23v4h10v-4"/><circle cx="27" cy="23" r="5"/></svg>rgb fixture</div>
          <div class="bg-[#78040c]"><svg viewBox="0 0 34 30"><path d="M17 5c-5 0-8 3-8 8 0 4 3 6 4 10h8c1-4 4-6 4-10 0-5-3-8-8-8zM13 23v5h8v-5M17 0v2M3 12h3M28 12h3M6 3l2 2M28 3l-2 2M6 22l2-2M28 22l-2-2"/></svg>light fixture</div>
          <div class="bg-[#78040c]"><svg viewBox="0 0 34 30"><path d="M20 8l6 6"/></svg></div>
        </div>
      </div>
      <div class="flex flex-col items-center w-[23px] shrink-0 bg-[#333]">
        <svg class="w-[16px] h-[24px] fill-none stroke-white stroke-[3px]" viewBox="0 0 16 24"><path d="M2 14l6-5 6 5"/></svg>
        <div class="w-full h-[178px] bg-[#505050]"></div>
        <div class="w-full h-[299px] bg-[#333] border border-[#8a8a8a]"></div>
        <div class="w-full h-[38px] bg-[#505050]"></div>
        <svg class="w-[16px] h-[21px] fill-none stroke-white stroke-[3px]" viewBox="0 0 16 21"><path d="M2 7l6 5 6-5"/></svg>
      </div>
    </div>
  </aside>
</body>
</html>
